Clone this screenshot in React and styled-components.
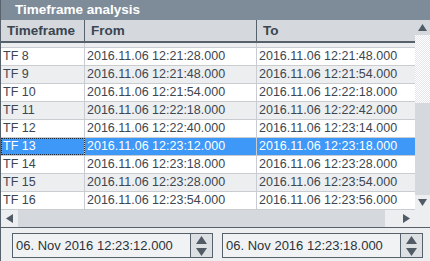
import React from "react";
import styled, { createGlobalStyle } from "styled-components";

const GlobalStyle = createGlobalStyle`
  html, body {
    margin: 0;
    padding: 0;
    background: #eceef0;
  }
  body {
    font-family: "Liberation Sans", Arial, sans-serif;
  }
`;

const rows = [
  ["TF 7", "2016.11.06 12:21:04.000", "2016.11.06 12:21:28.000"],
  ["TF 8", "2016.11.06 12:21:28.000", "2016.11.06 12:21:48.000"],
  ["TF 9", "2016.11.06 12:21:48.000", "2016.11.06 12:21:54.000"],
  ["TF 10", "2016.11.06 12:21:54.000", "2016.11.06 12:22:18.000"],
  ["TF 11", "2016.11.06 12:22:18.000", "2016.11.06 12:22:42.000"],
  ["TF 12", "2016.11.06 12:22:40.000", "2016.11.06 12:23:14.000"],
  ["TF 13", "2016.11.06 12:23:12.000", "2016.11.06 12:23:18.000"],
  ["TF 14", "2016.11.06 12:23:18.000", "2016.11.06 12:23:28.000"],
  ["TF 15", "2016.11.06 12:23:28.000", "2016.11.06 12:23:54.000"],
  ["TF 16", "2016.11.06 12:23:54.000", "2016.11.06 12:23:56.000"],
];

const Arrow = ({ dir, w = 9, h = 7 }) => {
  const pts = {
    up: `0,${h} ${w / 2},0 ${w},${h}`,
    down: `0,0 ${w},0 ${w / 2},${h}`,
    left: `${h},0 ${h},${w} 0,${w / 2}`,
    right: `0,0 ${h},${w / 2} 0,${w}`,
  }[dir];
  const horiz = dir === "left" || dir === "right";
  return (
    <svg width={horiz ? h : w} height={horiz ? w : h} style={{ display: "block" }}>
      <polygon points={pts} fill="#505b66" />
    </svg>
  );
};

const App = () => {
  return (
    <>
      <GlobalStyle />
      <Frame>
        <TitleBar>Timeframe analysis</TitleBar>
        <Body>
          <Main>
            <Header>
              <HeadCell $w={84}>Timeframe</HeadCell>
              <HeadCell $w={172}>From</HeadCell>
              <HeadCell $last>To</HeadCell>
            </Header>
            <Viewport>
              <List>
                {rows.map((r, i) => (
                  <Row key={r[0]} $alt={i % 2 === 0} $sel={r[0] === "TF 13"}>
                    <Cell $w={84} $focus={r[0] === "TF 13"}>{r[0]}</Cell>
                    <Cell $w={172}>{r[1]}</Cell>
                    <Cell $last>{r[2]}</Cell>
                  </Row>
                ))}
              </List>
            </Viewport>
          </Main>
          <VScroll>
            <VButton $top>
              <Arrow dir="up" />
            </VButton>
            <VTrack />
            <VThumb />
            <VButton>
              <Arrow dir="down" />
            </VButton>
          </VScroll>
        </Body>
        <HScroll>
          <HButton>
            <Arrow dir="left" />
          </HButton>
          <HThumb />
          <HRest />
          <HButton>
            <Arrow dir="right" />
          </HButton>
          <Corner />
        </HScroll>
        <Footer>
          <Spinner>
            <SpinText>06. Nov 2016 12:23:12.000</SpinText>
            <SpinButtons>
              <Arrow dir="up" w={11} h={8} />
              <Arrow dir="down" w={11} h={8} />
            </SpinButtons>
          </Spinner>
          <Spinner>
            <SpinText>06. Nov 2016 12:23:18.000</SpinText>
            <SpinButtons>
              <Arrow dir="up" w={11} h={8} />
              <Arrow dir="down" w={11} h={8} />
            </SpinButtons>
          </Spinner>
        </Footer>
      </Frame>
    </>
  );
};

export default App;

const Frame = styled.div`
  width: 430px;
  height: 261px;
  box-sizing: border-box;
  border-left: 1px solid #56616b;
  display: flex;
  flex-direction: column;
  background: #eceef0;
  overflow: hidden;
`;

const TitleBar = styled.div`
  height: 20px;
  flex-shrink: 0;
  background: #7e8c99;
  color: #ffffff;
  font-weight: bold;
  font-size: 13.5px;
  line-height: 20px;
  padding-left: 14px;
`;

const Body = styled.div`
  display: flex;
  height: 190px;
  flex-shrink: 0;
`;

const Main = styled.div`
  flex: 1;
  display: flex;
  flex-direction: column;
  min-width: 0;
`;

const Header = styled.div`
  display: flex;
  height: 21px;
  flex-shrink: 0;
  background: #d5d9dd;
  border-bottom: 2px solid #56616b;
`;

const HeadCell = styled.div`
  ${(p) => (p.$last ? "flex: 1;" : `width: ${p.$w}px;`)}
  box-sizing: border-box;
  flex-shrink: 0;
  border-right: ${(p) => (p.$last ? "none" : "1px solid #56616b")};
  padding-left: 6px;
  font-size: 13.5px;
  font-weight: bold;
  color: #3a4550;
  line-height: 22px;
`;

const Viewport = styled.div`
  flex: 1;
  overflow: hidden;
  background: #ffffff;
`;

const List = styled.div`
  margin-top: -13px;
`;

const Row = styled.div`
  display: flex;
  height: 18px;
  box-sizing: border-box;
  border-bottom: 1px solid #c9cdd1;
  background: ${(p) => (p.$sel ? "#3d98f8" : p.$alt ? "#eceef0" : "#ffffff")};
  color: ${(p) => (p.$sel ? "#ffffff" : "#3c4650")};
`;

const Cell = styled.div`
  ${(p) => (p.$last ? "flex: 1;" : `width: ${p.$w}px;`)}
  flex-shrink: 0;
  box-sizing: border-box;
  border-right: ${(p) => (p.$last ? "none" : "1px solid #c9cdd1")};
  padding-left: 2px;
  font-size: 12.5px;
  line-height: 17px;
  white-space: nowrap;
  overflow: hidden;
  ${(p) => p.$focus && "outline: 1px dotted #1a2a3a; outline-offset: -1px;"}
`;

const VScroll = styled.div`
  width: 15px;
  flex-shrink: 0;
  display: flex;
  flex-direction: column;
`;

const VButton = styled.div`
  height: 15px;
  flex-shrink: 0;
  display: flex;
  align-items: center;
  justify-content: center;
  background: ${(p) => (p.$top ? "#d5d9dd" : "#eceef0")};
`;

const VTrack = styled.div`
  height: 68px;
  flex-shrink: 0;
  background: repeating-conic-gradient(#e4e6e9 0 25%, #ffffff 0 50%) 0 0 / 2px 2px;
`;

const VThumb = styled.div`
  flex: 1;
  background: #d5d9dd;
`;

const HScroll = styled.div`
  display: flex;
  height: 18px;
  flex-shrink: 0;
  box-sizing: border-box;
  border-bottom: 1px solid #56616b;
  background: #eceef0;
`;

const HButton = styled.div`
  width: 17px;
  flex-shrink: 0;
  display: flex;
  align-items: center;
  justify-content: center;
`;

const HThumb = styled.div`
  width: 367px;
  flex-shrink: 0;
  background: #d5d9dd;
`;

const HRest = styled.div`
  flex: 1;
`;

const Corner = styled.div`
  width: 15px;
  flex-shrink: 0;
`;

const Footer = styled.div`
  flex: 1;
  display: flex;
  gap: 9px;
  padding: 5px 7px 3px 11px;
  background: #eceef0;
`;

const Spinner = styled.div`
  flex: 1;
  height: 25px;
  display: flex;
  box-sizing: border-box;
  border: 1px solid #56616b;
  background: #f1f2f3;
`;

const SpinText = styled.div`
  flex: 1;
  padding-left: 3px;
  font-size: 13px;
  line-height: 23px;
  color: #2a323a;
  white-space: nowrap;
`;

const SpinButtons = styled.div`
  width: 21px;
  flex-shrink: 0;
  border-left: 1px solid #56616b;
  background: #dde0e3;
  display: flex;
  flex-direction: column;
  align-items: center;
  justify-content: center;
  gap: 4px;
`;
